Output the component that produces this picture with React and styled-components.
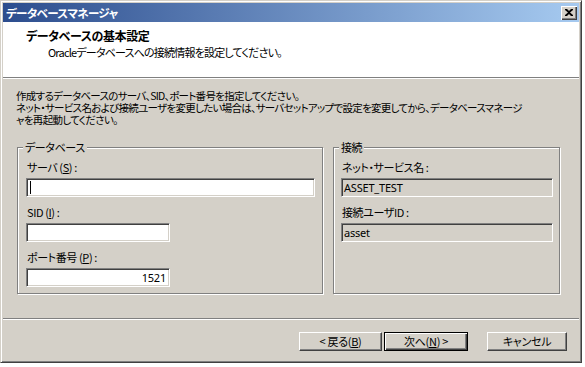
import React from 'react';
import styled, { createGlobalStyle } from 'styled-components';

const GlobalStyle = createGlobalStyle`
	html, body {
		margin: 0;
		padding: 0;
		background: #fff;
	}
	body {
		font-family: "Noto Sans CJK JP", "Noto Sans", sans-serif;
		font-size: 11px;
		color: #000;
		font-feature-settings: "palt";
	}
`;

const Window = styled.div`
	width: 582px;
	height: 363px;
	box-sizing: border-box;
	background: #d4d0c8;
	border: 1px solid;
	border-color: #d4d0c8 #404040 #404040 #d4d0c8;
	box-shadow: inset 1px 1px #fff, inset -1px -1px #808080;
	padding: 2px;
	display: flex;
	flex-direction: column;
`;

const TitleBar = styled.div`
	height: 19px;
	flex: none;
	display: flex;
	align-items: center;
	justify-content: space-between;
	padding: 0 2px 0 3px;
	background: linear-gradient(to right, #2c4d8e, #a6caf0);
`;

const TitleText = styled.span`
	color: #fff;
	font-weight: bold;
	font-size: 11.5px;
	line-height: 12px;
	letter-spacing: -0.6px;
`;

const CloseButton = styled.div`
	width: 16px;
	height: 14px;
	box-sizing: border-box;
	background: #d4d0c8;
	box-shadow: inset 1px 1px #fff, inset -1px -1px #404040, inset -2px -2px #808080;
	display: flex;
	align-items: center;
	justify-content: center;
	padding: 0 1px 1px 0;
`;

const Header = styled.div`
	height: 55px;
	flex: none;
	box-sizing: border-box;
	background: #fff;
	padding: 8px 0 0 23px;
`;

const HeaderTitle = styled.div`
	font-weight: bold;
	font-size: 12px;
	line-height: 12px;
	letter-spacing: -0.4px;
`;

const HeaderSub = styled.div`
	margin: 4px 0 0 22px;
	line-height: 12px;
	letter-spacing: -0.8px;
`;

const Rule = styled.div`
	flex: none;
	height: 0;
	border-top: 1px solid #808080;
	border-bottom: 1px solid #fff;
`;

const Body = styled.div`
	flex: 1;
	padding: 11px 14px 0;
`;

const Intro = styled.p`
	margin: 0 0 0 -1px;
	font-size: 10.5px;
	line-height: 12px;
	letter-spacing: -0.7px;
	white-space: nowrap;
`;

const Groups = styled.div`
	display: flex;
	gap: 10px;
	margin-top: 21px;
`;

const Group = styled.div`
	position: relative;
	width: ${(p) => p.$width}px;
	height: 147px;
	box-sizing: border-box;
	border: 1px solid #808080;
	box-shadow: inset 1px 1px #fff, 1px 1px #fff;
	padding: 13px 0 0 ${(p) => p.$pad}px;
	display: flex;
	flex-direction: column;
	gap: 9px;
`;

const Legend = styled.span`
	position: absolute;
	top: -7px;
	left: 5px;
	padding: 0 2px;
	background: #d4d0c8;
	line-height: 12px;
	letter-spacing: -0.4px;
`;

const Row = styled.div`
	display: flex;
	flex-direction: column;
	gap: 5px;
`;

const Label = styled.span`
	line-height: 12px;
	padding-left: 1px;
	letter-spacing: -0.4px;
	white-space: pre;
`;

const Field = styled.div`
	width: ${(p) => p.$width}px;
	height: 19px;
	box-sizing: border-box;
	background: ${(p) => (p.$readOnly ? '#d4d0c8' : '#fff')};
	border: 1px solid;
	border-color: #808080 #fff #fff #808080;
	box-shadow: inset 1px 1px #404040, inset -1px -1px #d4d0c8;
	padding: 0 3px 0 2px;
	display: flex;
	align-items: center;
	justify-content: ${(p) => (p.$right ? 'flex-end' : 'flex-start')};
	font-family: "Noto Sans", sans-serif;
	font-size: 11px;
	line-height: 15px;
	letter-spacing: -0.2px;
`;

const Caret = styled.span`
	width: 1px;
	height: 13px;
	margin-left: 1px;
	background: #000;
`;

const Footer = styled.div`
	flex: none;
	height: 40px;
	box-sizing: border-box;
	padding: 12px 12px 0 0;
	display: flex;
	justify-content: flex-end;
	align-items: flex-start;
`;

const Button = styled.div`
	width: ${(p) => p.$width}px;
	height: 19px;
	box-sizing: border-box;
	margin-left: ${(p) => p.$gap}px;
	border: 1px solid;
	border-color: ${(p) => (p.$default ? '#000' : '#fff #404040 #404040 #fff')};
	box-shadow: ${(p) =>
		p.$default
			? 'inset 1px 1px #fff, inset -1px -1px #404040, inset -2px -2px #808080'
			: 'inset -1px -1px #808080'};
	display: flex;
	align-items: center;
	justify-content: center;
	line-height: 12px;
	letter-spacing: -0.3px;
	padding-bottom: 1px;
	white-space: pre;
`;

const App = () => {
	return (
		<>
			<GlobalStyle />
			<Window>
				<TitleBar>
					<TitleText>データベースマネージャ</TitleText>
					<CloseButton>
						<svg width="8" height="7" viewBox="0 0 8 7">
							<path d="M0 0h2l2 2 2-2h2v1L5 3.5 8 6v1H6L4 5 2 7H0V6l3-2.5L0 1z" fill="#000" />
						</svg>
					</CloseButton>
				</TitleBar>
				<Header>
					<HeaderTitle>データベースの基本設定</HeaderTitle>
					<HeaderSub>Oracleデータベースへの接続情報を設定してください。</HeaderSub>
				</Header>
				<Rule />
				<Body>
					<Intro>
						作成するデータベースのサーバ、SID、ポート番号を指定してください。
						<br />
						ネット・サービス名および接続ユーザを変更したい場合は、サーバセットアップで設定を変更してから、データベースマネージ
						<br />
						ャを再起動してください。
					</Intro>
					<Groups>
						<Group $width={306} $pad={8}>
							<Legend>データベース</Legend>
							<Row>
								<Label>
									サーバ (<u>S</u>) :
								</Label>
								<Field $width={289}>
									<Caret />
								</Field>
							</Row>
							<Row>
								<Label>
									SID (<u>I</u>) :
								</Label>
								<Field $width={144} />
							</Row>
							<Row>
								<Label>
									ポート番号 (<u>P</u>) :
								</Label>
								<Field $width={144} $right>
									1521
								</Field>
							</Row>
						</Group>
						<Group $width={227} $pad={7}>
							<Legend>接続</Legend>
							<Row>
								<Label>ネット・サービス名 :</Label>
								<Field $width={212} $readOnly>
									ASSET_TEST
								</Field>
							</Row>
							<Row>
								<Label>接続ユーザID :</Label>
								<Field $width={212} $readOnly>
									asset
								</Field>
							</Row>
						</Group>
					</Groups>
				</Body>
				<Rule />
				<Footer>
					<Button $width={83} $gap={0}>
						&lt; 戻る(<u>B</u>)
					</Button>
					<Button $width={84} $gap={2} $default>
						次へ(<u>N</u>) &gt;
					</Button>
					<Button $width={80} $gap={19}>
						キャンセル
					</Button>
				</Footer>
			</Window>
		</>
	);
};

export default App;
